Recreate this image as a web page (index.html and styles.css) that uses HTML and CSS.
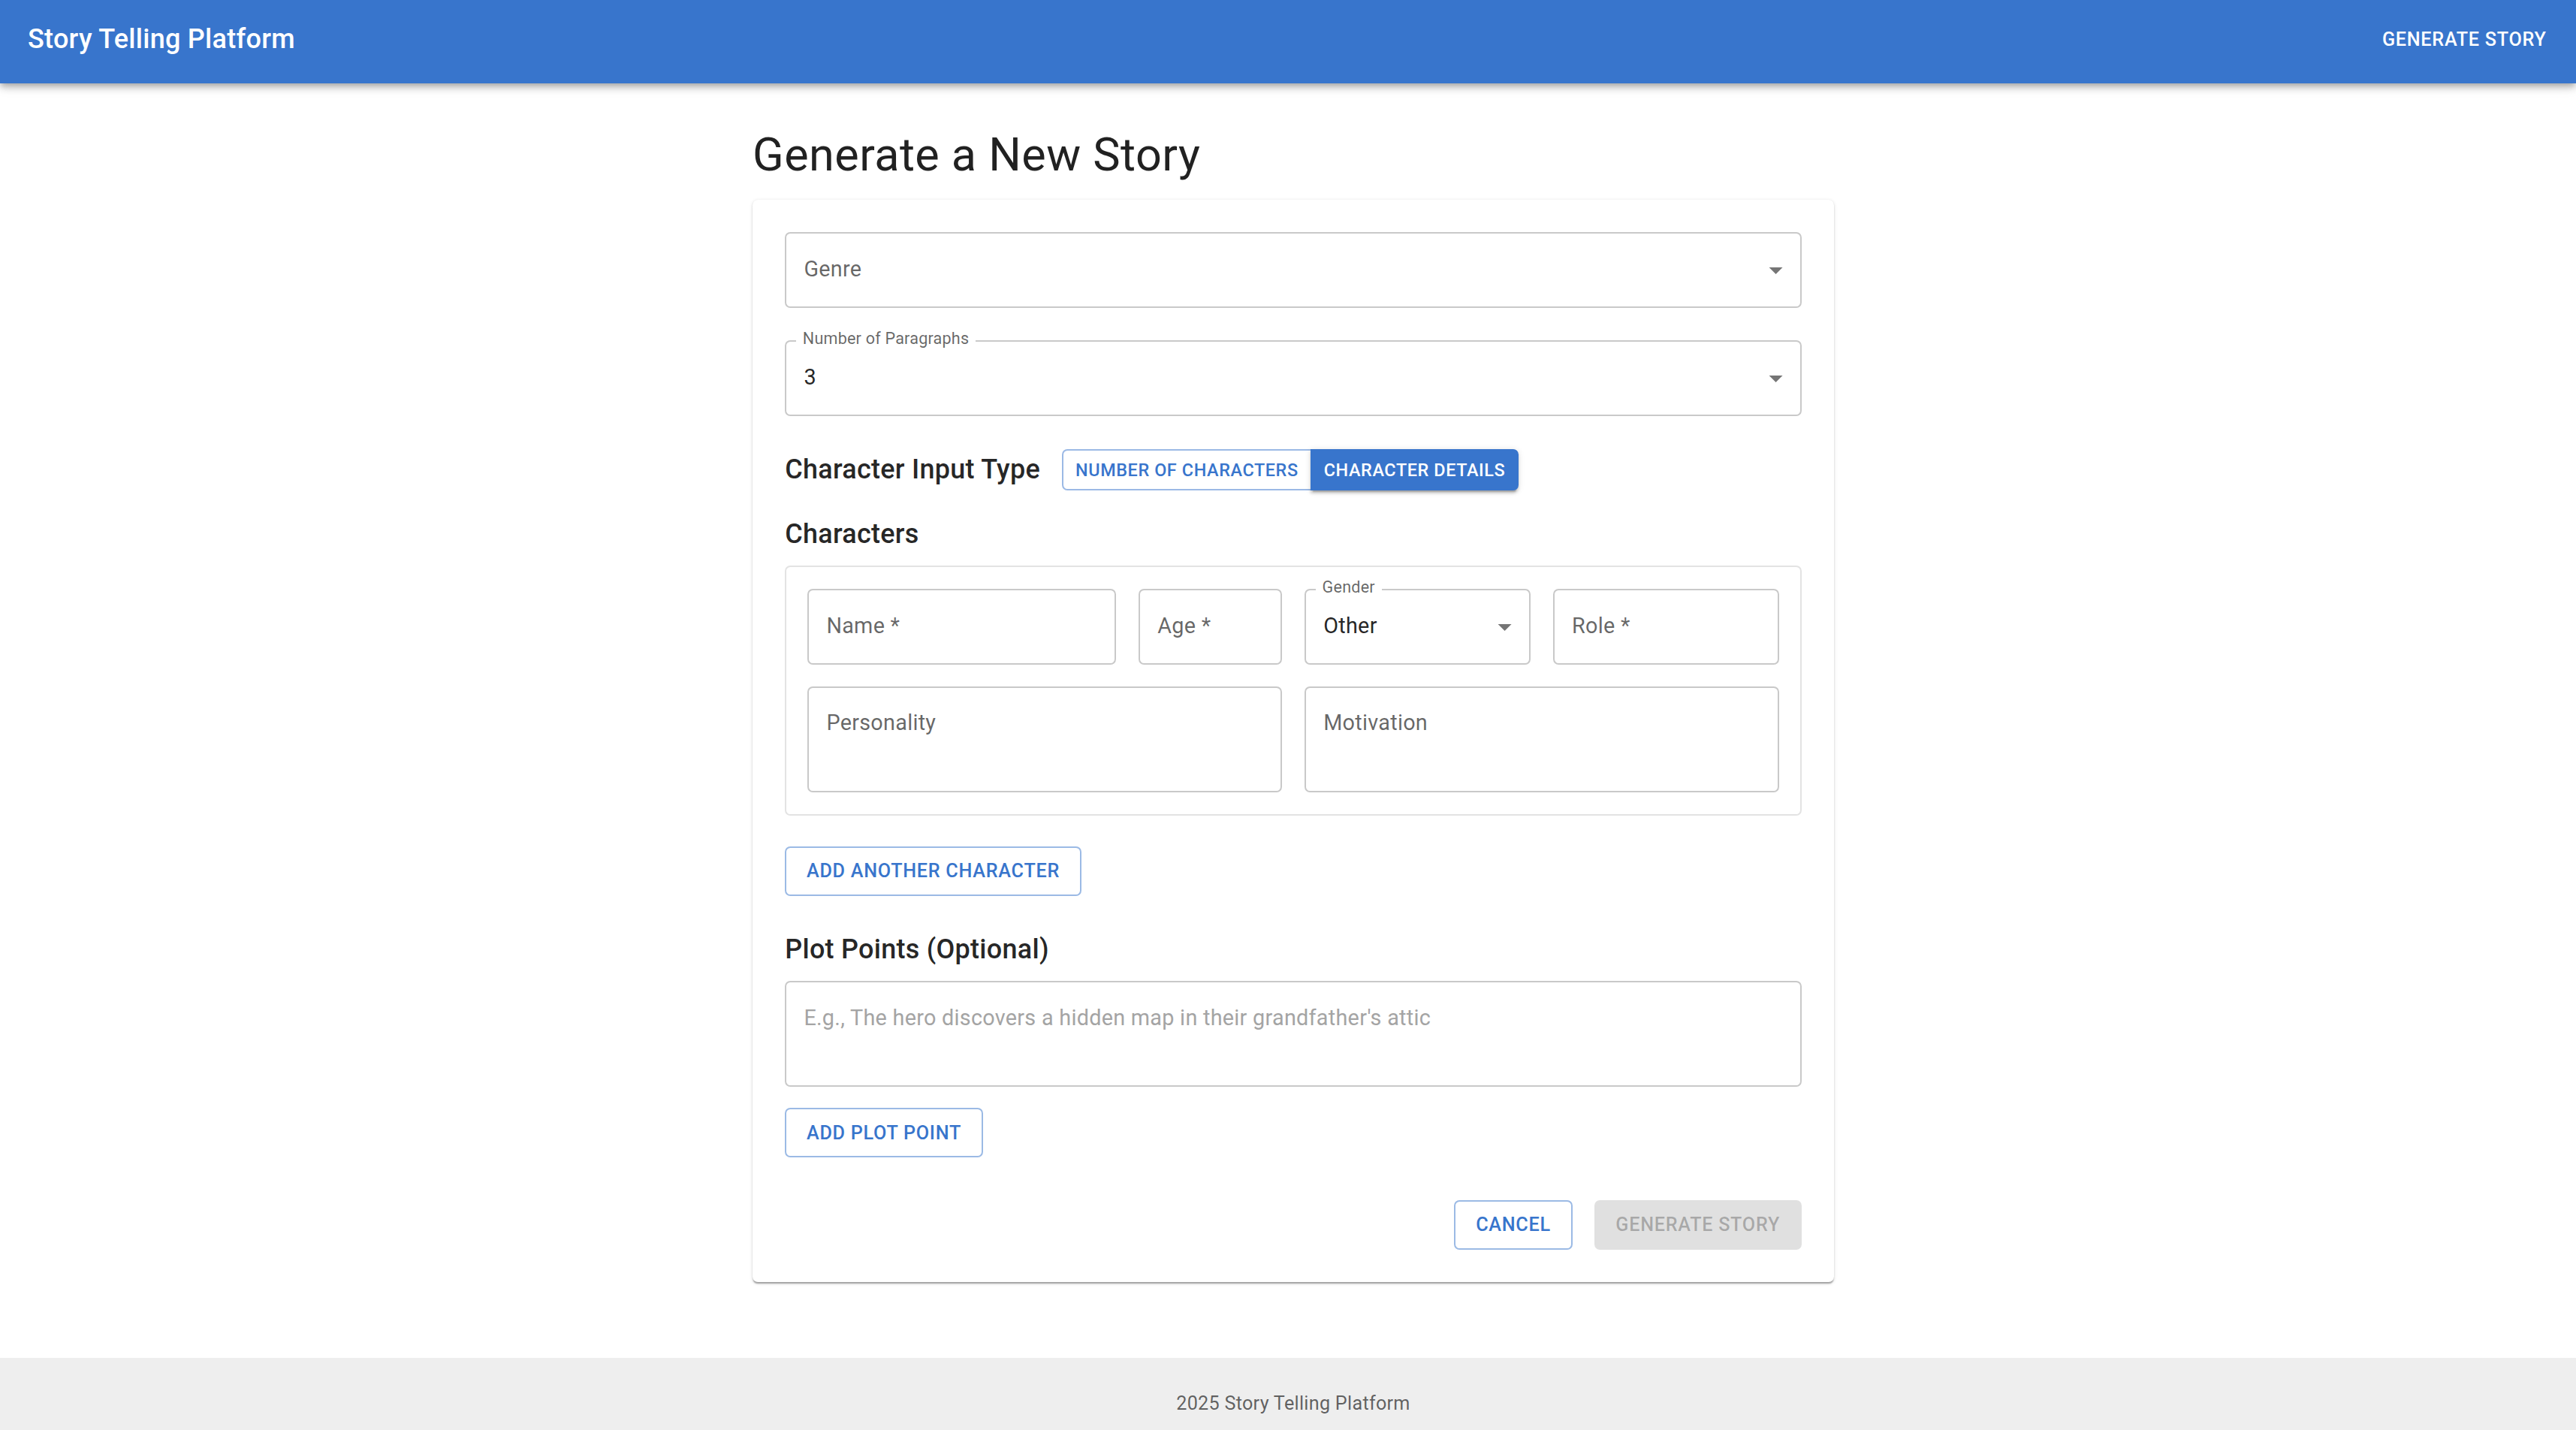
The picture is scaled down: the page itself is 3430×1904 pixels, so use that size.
FILE: index.html
```html
<!DOCTYPE html>
<html lang="en">
<head>
<meta charset="utf-8">
<title>Story Telling Platform</title>
<link rel="stylesheet" href="styles.css">
</head>
<body>
<header class="appbar">
  <div class="app-title">Story Telling Platform</div>
  <button class="nav-btn">Generate Story</button>
</header>

<main class="main">
  <div class="container">
    <h1 class="page-title">Generate a New Story</h1>
    <section class="card">
      <div class="field field-select mb">
        <span class="field-label">Genre</span>
        <svg class="select-arrow" viewBox="0 0 24 24"><path d="M7 10l5 5 5-5z"/></svg>
      </div>

      <div class="field field-select mb">
        <span class="notch">Number of Paragraphs</span>
        <span class="field-value">3</span>
        <svg class="select-arrow" viewBox="0 0 24 24"><path d="M7 10l5 5 5-5z"/></svg>
      </div>

      <div class="input-type-row">
        <h2 class="section-title">Character Input Type</h2>
        <div class="btn-group">
          <button class="tbtn tbtn-outlined">Number of Characters</button>
          <button class="tbtn tbtn-contained">Character Details</button>
        </div>
      </div>

      <h2 class="section-title characters-title">Characters</h2>
      <div class="char-box">
        <div class="char-row">
          <div class="field"><span class="field-label">Name *</span></div>
          <div class="field"><span class="field-label">Age *</span></div>
          <div class="field field-select">
            <span class="notch">Gender</span>
            <span class="field-value">Other</span>
            <svg class="select-arrow" viewBox="0 0 24 24"><path d="M7 10l5 5 5-5z"/></svg>
          </div>
          <div class="field"><span class="field-label">Role *</span></div>
        </div>
        <div class="char-row2">
          <div class="field field-multi"><span class="field-label">Personality</span></div>
          <div class="field field-multi"><span class="field-label">Motivation</span></div>
        </div>
      </div>

      <button class="outlined-btn add-char">Add Another Character</button>

      <h2 class="section-title plot-title">Plot Points (Optional)</h2>
      <div class="field field-multi field-plot">
        <span class="field-placeholder">E.g., The hero discovers a hidden map in their grandfather's attic</span>
      </div>
      <button class="outlined-btn add-plot">Add Plot Point</button>

      <div class="actions">
        <button class="outlined-btn">Cancel</button>
        <button class="disabled-btn" disabled>Generate Story</button>
      </div>
    </section>
  </div>
</main>

<footer class="footer">2025 Story Telling Platform</footer>
</body>
</html>
```
FILE: styles.css
```css
* {
  box-sizing: border-box;
}

html,
body {
  margin: 0;
  padding: 0;
}

body {
  font-family: Roboto, "Liberation Sans", Arial, sans-serif;
  color: rgba(0, 0, 0, 0.87);
  background: #ffffff;
  min-height: 100vh;
  display: flex;
  flex-direction: column;
}

button {
  font-family: inherit;
  margin: 0;
  cursor: pointer;
}

/* App bar */
.appbar {
  position: relative;
  z-index: 2;
  height: 111px;
  flex-shrink: 0;
  background: #3875cc;
  color: #ffffff;
  display: flex;
  align-items: center;
  justify-content: space-between;
  padding: 0 25px 6px 37px;
  box-shadow: 0 3.6px 7.2px -1.8px rgba(0, 0, 0, 0.2),
    0 7.2px 9px 0 rgba(0, 0, 0, 0.14),
    0 1.8px 18px 0 rgba(0, 0, 0, 0.12);
}

.app-title {
  font-size: 36px;
  font-weight: 500;
  line-height: 57.6px;
  letter-spacing: 0.27px;
}

.nav-btn {
  background: transparent;
  border: 0;
  color: #ffffff;
  font-size: 25.2px;
  font-weight: 500;
  line-height: 44px;
  letter-spacing: 0.72px;
  text-transform: uppercase;
  padding: 0 14.4px;
}

/* Main */
.main {
  flex: 1;
  display: flex;
  justify-content: center;
  padding: 57.6px 0 0 14px;
}

.container {
  width: 1440px;
}

.page-title {
  margin: 0 0 21.4px;
  font-size: 61.2px;
  font-weight: 400;
  line-height: 75.6px;
  letter-spacing: 0.45px;
}

.card {
  background: #ffffff;
  border-radius: 7.2px;
  padding: 43.2px;
  box-shadow: 0 3.6px 1.8px -1.8px rgba(0, 0, 0, 0.2),
    0 1.8px 1.8px 0 rgba(0, 0, 0, 0.14),
    0 1.8px 5.4px 0 rgba(0, 0, 0, 0.12);
}

/* Fields */
.field {
  position: relative;
  height: 100.8px;
  border: 2px solid #c9c9c9;
  border-radius: 7.2px;
  display: flex;
  align-items: center;
  padding: 0 10.6px 0 23.2px;
  font-size: 28.8px;
  line-height: 41.4px;
  letter-spacing: 0.27px;
  background: #ffffff;
}

.mb {
  margin-bottom: 43.2px;
}

.field-label {
  color: rgba(0, 0, 0, 0.6);
}

.field-value {
  color: rgba(0, 0, 0, 0.87);
}

.field-placeholder {
  color: #a4a4a4;
}

.notch {
  position: absolute;
  top: -15px;
  left: 12.6px;
  padding: 0 9px;
  background: #ffffff;
  font-size: 21.6px;
  line-height: 21.6px;
  letter-spacing: 0.2px;
  color: rgba(0, 0, 0, 0.6);
}

.select-arrow {
  width: 43.2px;
  height: 43.2px;
  margin-left: auto;
  flex-shrink: 0;
  fill: rgba(0, 0, 0, 0.54);
}

.field-multi {
  height: 141px;
  align-items: flex-start;
  padding-top: 26.5px;
}

/* Character input type */
.input-type-row {
  display: flex;
  align-items: center;
  gap: 29px;
  height: 57.6px;
  margin-bottom: 28.5px;
}

.section-title {
  margin: 0;
  font-size: 36px;
  font-weight: 500;
  line-height: 57.6px;
  letter-spacing: 0.27px;
}

.btn-group {
  display: flex;
}

.tbtn {
  height: 55.35px;
  display: flex;
  align-items: center;
  font-size: 23.4px;
  font-weight: 500;
  letter-spacing: 0.6px;
  text-transform: uppercase;
}

.tbtn-outlined {
  background: #ffffff;
  color: #3875cc;
  border: 2px solid rgba(56, 117, 204, 0.5);
  border-right: 0;
  border-radius: 7.2px 0 0 7.2px;
  padding: 0 16px;
}

.tbtn-contained {
  background: #3875cc;
  color: #ffffff;
  border: 0;
  border-radius: 0 7.2px 7.2px 0;
  padding: 0 18px;
  box-shadow: 0 5.4px 1.8px -3.6px rgba(0, 0, 0, 0.2),
    0 3.6px 3.6px 0 rgba(0, 0, 0, 0.14),
    0 1.8px 9px 0 rgba(0, 0, 0, 0.12);
}

.characters-title {
  margin-bottom: 12.3px;
}

.char-box {
  border: 2px solid #e3e3e3;
  border-radius: 7.2px;
  padding: 29px 28px;
}

.char-row {
  display: grid;
  grid-template-columns: 411fr 191fr 301fr 301fr;
  column-gap: 30px;
}

.char-row2 {
  display: grid;
  grid-template-columns: 1fr 1fr;
  column-gap: 30px;
  margin-top: 29px;
}

/* Buttons */
.outlined-btn {
  display: flex;
  align-items: center;
  width: max-content;
  height: 65.7px;
  padding: 0 26.8px;
  background: #ffffff;
  color: #3875cc;
  border: 2px solid rgba(56, 117, 204, 0.5);
  border-radius: 7.2px;
  font-size: 25.2px;
  font-weight: 500;
  letter-spacing: 0.72px;
  text-transform: uppercase;
}

.disabled-btn {
  display: flex;
  align-items: center;
  height: 65.7px;
  padding: 0 28.8px;
  background: rgba(0, 0, 0, 0.12);
  color: rgba(0, 0, 0, 0.26);
  border: 0;
  border-radius: 7.2px;
  font-size: 25.2px;
  font-weight: 500;
  letter-spacing: 0.72px;
  text-transform: uppercase;
  cursor: default;
}

.add-char {
  margin-top: 41.5px;
}

.plot-title {
  margin: 43.5px 0 12.6px;
}

.add-plot {
  margin-top: 28px;
}

.actions {
  display: flex;
  justify-content: flex-end;
  gap: 29px;
  margin-top: 57px;
}

/* Footer */
.footer {
  flex-shrink: 0;
  margin-top: auto;
  background: #eeeeee;
  padding: 43.2px 0 16.8px 14px;
  text-align: center;
  font-size: 25.2px;
  line-height: 36px;
  letter-spacing: 0.27px;
  color: rgba(0, 0, 0, 0.6);
}
```
